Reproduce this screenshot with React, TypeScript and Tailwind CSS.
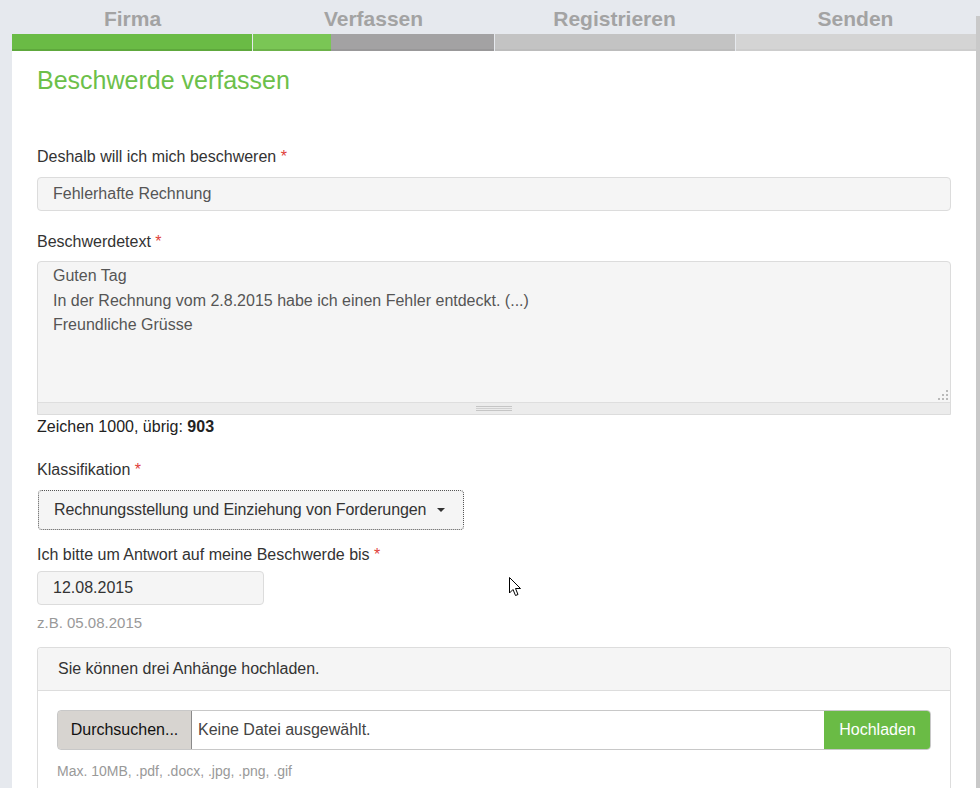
import React from 'react';

const steps = [
  { label: 'Firma' },
  { label: 'Verfassen' },
  { label: 'Registrieren' },
  { label: 'Senden' },
];

function Req() {
  return <span className="text-[#e0413a]"> *</span>;
}

function Label({ children }: { children: React.ReactNode }) {
  return <div className="text-[16px] text-[#333] leading-[20px]">{children}</div>;
}

export default function App() {
  return (
    <div className="relative w-[980px] h-[788px] overflow-hidden bg-[#e6e9ee] font-['Liberation_Sans',Arial,sans-serif]">
      <div className="flex h-full">
        <div className="w-[12px] shrink-0" />
        <div className="w-[964px] shrink-0 flex flex-col">
          {/* steps header */}
          <div className="flex h-[34px] shrink-0">
            {steps.map((s) => (
              <div key={s.label} className="flex-1 flex items-center justify-center text-[21px] font-bold text-[#a3a3a3] pt-[4px]">
                {s.label}
              </div>
            ))}
          </div>
          <div className="flex h-[17px] shrink-0 gap-px">
            <div className="flex-1 bg-[#6abb45] border-b-2 border-[#5ea83c]" />
            <div className="flex-1 flex">
              <div className="w-[78px] bg-[#7ac655] border-b-2 border-[#6cb249]" />
              <div className="flex-1 bg-[#a3a2a3] border-b-2 border-[#999899]" />
            </div>
            <div className="flex-1 bg-[#c3c3c3] border-b-2 border-[#bcbcbc]" />
            <div className="flex-1 bg-[#d4d4d4] border-b-2 border-[#cdcdcd]" />
          </div>

          {/* content */}
          <div className="flex-1 min-h-0 bg-white px-[25px]">
            <h1 className="text-[25px] leading-[28px] text-[#6cc04a] mt-[15px]">Beschwerde verfassen</h1>

            <div className="mt-[53px]">
              <Label>
                Deshalb will ich mich beschweren<Req />
              </Label>
              <div className="mt-[10px] h-[34px] rounded-[4px] border border-[#dcdcdc] bg-[#f5f5f5] px-[15px] flex items-center text-[16px] text-[#555]">
                Fehlerhafte Rechnung
              </div>
            </div>

            <div className="mt-[21px]">
              <Label>
                Beschwerdetext<Req />
              </Label>
              <div className="mt-[9px] rounded-t-[4px] border border-[#dcdcdc] bg-[#f5f5f5]">
                <div className="relative h-[140px] px-[15px] pt-[2px] text-[16px] leading-[24.5px] text-[#555]">
                  <div>Guten Tag</div>
                  <div>In der Rechnung vom 2.8.2015 habe ich einen Fehler entdeckt. (...)</div>
                  <div>Freundliche Grüsse</div>
                  <svg className="absolute right-[2px] bottom-[2px]" width="10" height="10" viewBox="0 0 10 10">
                    <rect x="8" y="0" width="2" height="2" fill="#b9b9b9" />
                    <rect x="4" y="4" width="2" height="2" fill="#b9b9b9" />
                    <rect x="8" y="4" width="2" height="2" fill="#b9b9b9" />
                    <rect x="0" y="8" width="2" height="2" fill="#b9b9b9" />
                    <rect x="4" y="8" width="2" height="2" fill="#b9b9b9" />
                    <rect x="8" y="8" width="2" height="2" fill="#b9b9b9" />
                  </svg>
                </div>
                <div className="h-[12px] border-t border-[#dedede] bg-[#ececec] flex items-center justify-center">
                  <div className="w-[36px] h-[5px] border-y border-[#c5c5c5] flex items-center">
                    <div className="w-full h-px bg-[#d0d0d0]" />
                  </div>
                </div>
              </div>
              <div className="mt-[2px] text-[16px] leading-[20px] text-[#222]">
                Zeichen 1000, übrig: <b>903</b>
              </div>
            </div>

            <div className="mt-[23px]">
              <Label>
                Klassifikation<Req />
              </Label>
              <div className="mt-[10px] ml-px w-[426px] h-[40px] rounded-[4px] border border-dotted border-[#555] bg-[#f5f5f5] flex items-center pl-[15px] pr-[18px] text-[16px] text-[#333]">
                <span className="flex-1 tracking-[-0.1px]">Rechnungsstellung und Einziehung von Forderungen</span>
                <span className="w-0 h-0 border-l-[4px] border-r-[4px] border-t-[4px] border-l-transparent border-r-transparent border-t-[#333]" />
              </div>
            </div>

            <div className="mt-[15px]">
              <Label>
                Ich bitte um Antwort auf meine Beschwerde bis<Req />
              </Label>
              <div className="mt-[6px] w-[227px] h-[34px] rounded-[4px] border border-[#dcdcdc] bg-[#f5f5f5] px-[15px] flex items-center text-[16px] text-[#333]">
                12.08.2015
              </div>
              <div className="mt-[8px] text-[15px] leading-[20px] text-[#999]">z.B. 05.08.2015</div>
            </div>

            <div className="mt-[14px] rounded-t-[4px] border border-[#dddddd] border-b-0 h-[200px]">
              <div className="h-[43px] bg-[#f5f5f5] border-b border-[#dddddd] rounded-t-[4px] px-[20px] flex items-center text-[16px] text-[#333]">
                Sie können drei Anhänge hochladen.
              </div>
              <div className="px-[19px] pt-[19px]">
                <div className="flex h-[40px] rounded-[4px] overflow-hidden border border-[#c8c8c8]">
                  <div className="w-[135px] bg-[#d7d4d0] border border-[#8a8a8a] rounded-l-[3px] -m-px mr-0 flex items-center justify-center text-[16px] text-[#111]">
                    Durchsuchen...
                  </div>
                  <div className="flex-1 bg-white flex items-center pl-[6px] text-[16px] text-[#444]">
                    Keine Datei ausgewählt.
                  </div>
                  <div className="w-[107px] bg-[#6abb45] -my-px -mr-px flex items-center justify-center text-[16px] text-white">
                    Hochladen
                  </div>
                </div>
                <div className="mt-[11px] text-[14px] leading-[20px] text-[#999]">
                  Max. 10MB, .pdf, .docx, .jpg, .png, .gif
                </div>
              </div>
            </div>
          </div>
        </div>
        <div className="w-[4px] shrink-0 bg-[#c9c9c9] mt-[16px]" />
      </div>

      {/* mouse pointer */}
      <svg className="absolute left-[509px] top-[577px]" width="13" height="21" viewBox="0 0 13 21">
        <path d="M0.5 0.5 L0.5 16 L4 12.5 L6.5 18.5 L9 17.5 L6.5 11.5 L11.5 11.5 Z" fill="#fff" stroke="#000" strokeWidth="1" strokeLinejoin="round" />
      </svg>
    </div>
  );
}
